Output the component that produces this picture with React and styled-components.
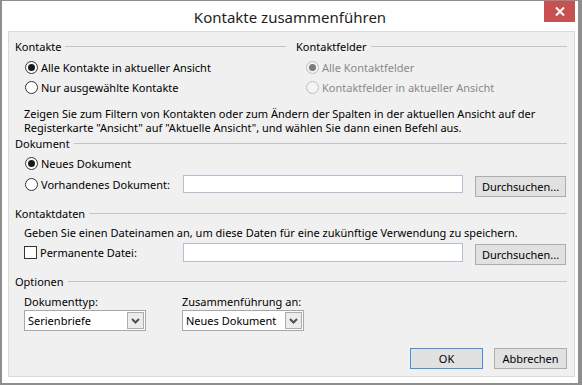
import React from "react";
import styled, { createGlobalStyle } from "styled-components";

const GlobalStyle = createGlobalStyle`
  html, body {
    margin: 0;
    padding: 0;
    background: #ffffff;
  }
  body {
    font-family: "Noto Sans", "Open Sans", sans-serif;
  }
`;

const Window = styled.div`
  position: relative;
  box-sizing: border-box;
  width: 582px;
  height: 385px;
  background: #ffffff;
  border-style: solid;
  border-color: #8e8e8e;
  border-width: 1px 4px 2px 2px;
  display: flex;
  flex-direction: column;
  font-family: "Noto Sans", "Open Sans", sans-serif;
  font-size: 11px;
  color: #000000;
`;

const TitleBar = styled.div`
  height: 30px;
  display: flex;
  align-items: center;
  justify-content: center;
  padding-top: 2px;
  box-sizing: border-box;
`;

const Title = styled.div`
  font-size: 15px;
  color: #1e1e1e;
`;

const CloseButton = styled.div`
  position: absolute;
  top: 0;
  right: 3px;
  width: 31px;
  height: 21px;
  background: #c75050;
  display: flex;
  align-items: center;
  justify-content: center;
`;

const Panel = styled.div`
  flex: 1;
  margin: 0 3px 6px 6px;
  border: 1px solid #dadada;
  background: #f0f0f0;
  padding: 6px 7px 0 6px;
  display: flex;
  flex-direction: column;
`;

const TopGrid = styled.div`
  display: grid;
  grid-template-columns: 281px 1fr;
`;

const Header = styled.div`
  display: flex;
  align-items: center;
  height: 16px;
  margin-top: ${(p) => p.$top || 0}px;
  margin-right: ${(p) => p.$right || 0}px;
`;

const HeaderLine = styled.div`
  flex: 1;
  height: 1px;
  background: #c4c4c4;
  margin-left: 4px;
`;

const OptionList = styled.div`
  display: flex;
  flex-direction: column;
  padding-left: 10px;
  margin-top: ${(p) => p.$top || 0}px;
`;

const Option = styled.label`
  display: flex;
  align-items: center;
  gap: 3px;
  height: ${(p) => p.$height || 20}px;
  width: ${(p) => (p.$width ? `${p.$width}px` : "auto")};
  flex-shrink: 0;
  color: ${(p) => (p.$disabled ? "#8a8a8a" : "#000000")};
`;

const RadioCircle = styled.span`
  box-sizing: border-box;
  width: 13px;
  height: 13px;
  border-radius: 50%;
  border: 1px solid ${(p) => (p.$disabled ? "#bdbdbd" : "#333333")};
  background: ${(p) => (p.$disabled ? "#f4f4f4" : "#ffffff")};
  display: flex;
  align-items: center;
  justify-content: center;
  flex-shrink: 0;
  &::after {
    content: "";
    display: ${(p) => (p.$checked ? "block" : "none")};
    width: 7px;
    height: 7px;
    border-radius: 50%;
    background: ${(p) => (p.$disabled ? "#7b7b7b" : "#1a1a1a")};
  }
`;

const CheckBox = styled.span`
  box-sizing: border-box;
  width: 13px;
  height: 13px;
  border: 1px solid #333333;
  background: #ffffff;
  flex-shrink: 0;
`;

const Paragraph = styled.div`
  margin: ${(p) => p.$top || 0}px 0 0 9px;
  line-height: ${(p) => p.$line || 14}px;
`;

const FieldRow = styled.div`
  display: flex;
  align-items: flex-start;
  margin-top: ${(p) => p.$top || 0}px;
  padding-left: ${(p) => p.$indent || 0}px;
`;

const TextBox = styled.div`
  box-sizing: border-box;
  width: 280px;
  height: ${(p) => p.$height || 18}px;
  background: #ffffff;
  border: 1px solid #b3c0cf;
`;

const Button = styled.div`
  box-sizing: border-box;
  width: ${(p) => p.$width || 91}px;
  height: 21px;
  margin-left: ${(p) => p.$left || 0}px;
  margin-top: ${(p) => p.$top || 0}px;
  background: #e1e1e1;
  border: 1px solid ${(p) => (p.$default ? "#3d94e6" : "#adadad")};
  display: flex;
  align-items: center;
  justify-content: center;
  color: #000000;
`;

const OptionsGrid = styled.div`
  display: grid;
  grid-template-columns: 158px 1fr;
  margin-top: 5px;
  padding-left: 9px;
`;

const FieldLabel = styled.div`
  height: 16px;
  line-height: 16px;
`;

const Select = styled.div`
  box-sizing: border-box;
  width: 122px;
  height: 21px;
  background: #ffffff;
  border: 1px solid #a8a8a8;
  display: flex;
  align-items: center;
  justify-content: space-between;
  padding: 0 1px 0 3px;
`;

const SelectArrow = styled.span`
  box-sizing: border-box;
  width: 17px;
  height: 17px;
  background: #ececec;
  border: 1px solid #acacac;
  display: flex;
  align-items: center;
  justify-content: center;
`;

const ButtonBar = styled.div`
  display: flex;
  justify-content: flex-end;
  margin-top: 17px;
`;

const Radio = ({ checked, disabled, children, width, height }) => (
  <Option $disabled={disabled} $width={width} $height={height}>
    <RadioCircle $checked={checked} $disabled={disabled} />
    {children}
  </Option>
);

const Section = ({ title, top, right }) => (
  <Header $top={top} $right={right}>
    {title}
    <HeaderLine />
  </Header>
);

const Dropdown = ({ value }) => (
  <Select>
    {value}
    <SelectArrow>
      <svg width="9" height="6" viewBox="0 0 9 6">
        <polyline points="1,1 4.5,4.5 8,1" fill="none" stroke="#505050" strokeWidth="2" />
      </svg>
    </SelectArrow>
  </Select>
);

const App = () => {
  return (
    <Window>
      <GlobalStyle />
      <TitleBar>
        <Title>Kontakte zusammenführen</Title>
      </TitleBar>
      <CloseButton>
        <svg width="10" height="9" viewBox="0 0 10 9">
          <path d="M1 0.5 L9 8.5 M9 0.5 L1 8.5" stroke="#ffffff" strokeWidth="2" />
        </svg>
      </CloseButton>
      <Panel>
        <TopGrid>
          <div>
            <Section title="Kontakte" right={10} />
            <OptionList $top={3}>
              <Radio checked>Alle Kontakte in aktueller Ansicht</Radio>
              <Radio>Nur ausgewählte Kontakte</Radio>
            </OptionList>
          </div>
          <div>
            <Section title="Kontaktfelder" />
            <OptionList $top={3}>
              <Radio checked disabled>Alle Kontaktfelder</Radio>
              <Radio disabled>Kontaktfelder in aktueller Ansicht</Radio>
            </OptionList>
          </div>
        </TopGrid>

        <Paragraph $top={10}>
          Zeigen Sie zum Filtern von Kontakten oder zum Ändern der Spalten in der aktuellen Ansicht auf der
          <br />
          Registerkarte "Ansicht" auf "Aktuelle Ansicht", und wählen Sie dann einen Befehl aus.
        </Paragraph>

        <Section title="Dokument" top={0} />
        <OptionList $top={2}>
          <Radio checked>Neues Dokument</Radio>
        </OptionList>
        <FieldRow $top={2} $indent={10}>
          <Radio width={158} height={18}>Vorhandenes Dokument:</Radio>
          <TextBox $height={18} />
          <Button $left={12} $top={1}>Durchsuchen...</Button>
        </FieldRow>

        <Section title="Kontaktdaten" top={8} />
        <Paragraph $top={4} $line={16}>
          Geben Sie einen Dateinamen an, um diese Daten für eine zukünftige Verwendung zu speichern.
        </Paragraph>
        <FieldRow $top={2} $indent={9}>
          <Option $width={159} $height={19}>
            <CheckBox />
            Permanente Datei:
          </Option>
          <TextBox $height={19} />
          <Button $left={12} $top={1}>Durchsuchen...</Button>
        </FieldRow>

        <Section title="Optionen" top={8} />
        <OptionsGrid>
          <div>
            <FieldLabel>Dokumenttyp:</FieldLabel>
            <Dropdown value="Serienbriefe" />
          </div>
          <div>
            <FieldLabel>Zusammenführung an:</FieldLabel>
            <Dropdown value="Neues Dokument" />
          </div>
        </OptionsGrid>

        <ButtonBar>
          <Button $width={73} $default>OK</Button>
          <Button $width={73} $left={11}>Abbrechen</Button>
        </ButtonBar>
      </Panel>
    </Window>
  );
};

export default App;
